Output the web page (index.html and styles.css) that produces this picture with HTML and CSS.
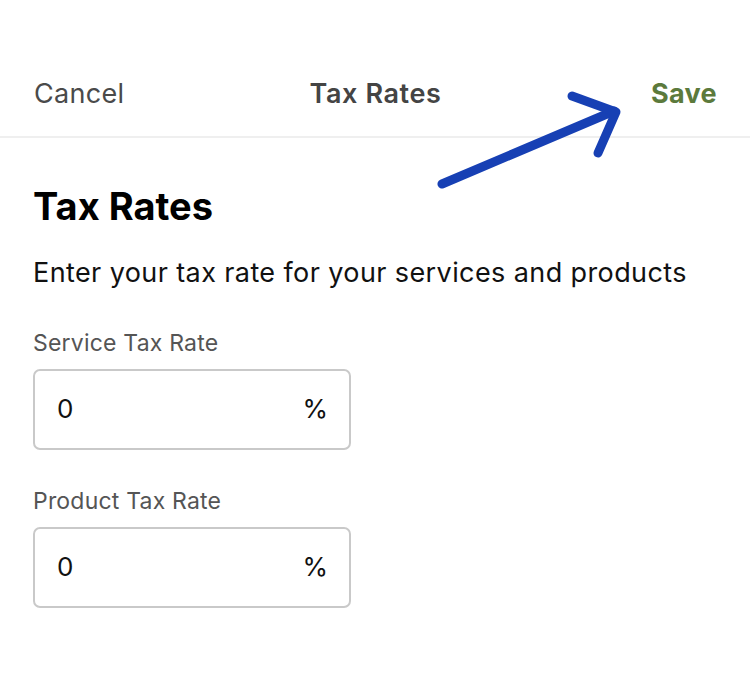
FILE: index.html
```html
<!DOCTYPE html>
<html lang="en">
<head>
<meta charset="utf-8">
<title>Tax Rates</title>
<link rel="stylesheet" href="styles.css">
</head>
<body>
<div class="screen">
  <header class="topbar">
    <span class="nav-btn cancel">Cancel</span>
    <span class="nav-title">Tax Rates</span>
    <span class="nav-btn save">Save</span>
  </header>
  <main class="content">
    <h1 class="heading">Tax Rates</h1>
    <p class="subtitle">Enter your tax rate for your services and products</p>
    <div class="field">
      <label class="field-label">Service Tax Rate</label>
      <div class="input-box"><span class="value">0</span><span class="unit">%</span></div>
    </div>
    <div class="field">
      <label class="field-label">Product Tax Rate</label>
      <div class="input-box"><span class="value">0</span><span class="unit">%</span></div>
    </div>
  </main>
  <svg class="arrow" width="750" height="680" viewBox="0 0 750 680" aria-hidden="true">
    <path d="M442 184 L614 111" fill="none" stroke="#1740b4" stroke-width="9" stroke-linecap="round"/>
    <path d="M572 96 L616 112 L598 153" fill="none" stroke="#1740b4" stroke-width="9" stroke-linecap="round" stroke-linejoin="round"/>
  </svg>
</div>
</body>
</html>
```
FILE: styles.css
```css
html, body {
  margin: 0;
  padding: 0;
  background: #fff;
}
body {
  font-family: Inter, "Noto Sans", "Liberation Sans", sans-serif;
  color: #111;
}
.screen {
  position: relative;
  width: 750px;
  height: 680px;
  overflow: hidden;
}
.topbar {
  height: 56px;
  padding: 80px 33px 0 34px;
  border-bottom: 2px solid #efefef;
  display: flex;
  justify-content: space-between;
  align-items: flex-start;
}
.nav-btn, .nav-title {
  font-size: 27px;
  line-height: 27px;
  letter-spacing: 0.3px;
}
.cancel {
  color: #4a4a4a;
  width: 150px;
}
.nav-title {
  color: #444;
  font-weight: 600;
  letter-spacing: 0.6px;
}
.save {
  color: #5c7a3c;
  font-weight: 700;
  width: 150px;
  text-align: right;
}
.content {
  padding: 49px 33px 0 33px;
}
.heading {
  margin: 0;
  font-size: 38px;
  line-height: 38px;
  font-weight: 700;
  color: #000;
}
.subtitle {
  margin: 34px 0 0 0;
  font-size: 27px;
  line-height: 27px;
  letter-spacing: 0.4px;
  color: #111;
}
.field {
  margin-top: 46px;
  display: flex;
  flex-direction: column;
  gap: 14px;
}
.field + .field {
  margin-top: 40px;
}
.field-label {
  font-size: 23px;
  line-height: 23px;
  letter-spacing: 0.2px;
  color: #555;
}
.input-box {
  box-sizing: border-box;
  width: 318px;
  height: 81px;
  border: 2px solid #c9c9c9;
  border-radius: 7px;
  padding: 0 21px 3px 22px;
  display: flex;
  justify-content: space-between;
  align-items: center;
  font-size: 26px;
  color: #111;
}
.arrow {
  position: absolute;
  left: 0;
  top: 0;
  pointer-events: none;
}
```
